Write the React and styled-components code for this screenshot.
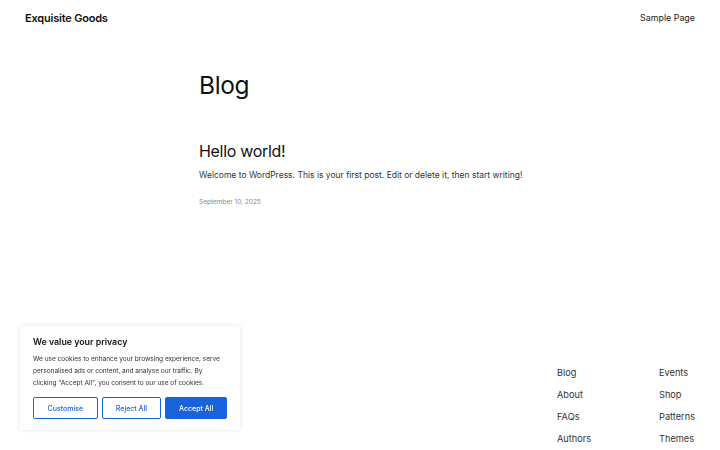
import styled, { createGlobalStyle } from "styled-components";

const Global = createGlobalStyle`
  html, body { margin: 0; padding: 0; background: #fff; }
  body {
    font-family: Inter, "Noto Sans", "Liberation Sans", sans-serif;
    color: #111;
    -webkit-font-smoothing: antialiased;
  }
`;

const Page = styled.div`
  width: 720px;
  height: 450px;
  display: flex;
  flex-direction: column;
  overflow: hidden;
`;

const Header = styled.header`
  display: flex;
  justify-content: space-between;
  align-items: center;
  height: 35px;
  padding: 0 25px;
`;

const SiteTitle = styled.div`
  font-size: 11px;
  font-weight: 600;
  letter-spacing: -0.2px;
`;

const NavLink = styled.a`
  font-size: 8.9px;
  color: #222;
  text-decoration: none;
`;

const Main = styled.main`
  width: 322px;
  margin: 0 auto;
  flex: 1;
`;

const PageTitle = styled.h1`
  margin: 34px 0 0;
  font-size: 24.5px;
  font-weight: 400;
  letter-spacing: -0.4px;
  line-height: 32px;
`;

const PostTitle = styled.h2`
  margin: 40px 0 0;
  font-size: 16px;
  font-weight: 400;
  letter-spacing: -0.3px;
  line-height: 20px;
`;

const Excerpt = styled.p`
  margin: 8px 0 0;
  font-size: 8.5px;
  line-height: 12px;
  color: #333;
  white-space: nowrap;
`;

const PostDate = styled.div`
  margin-top: 17px;
  font-size: 6.5px;
  color: #888;
`;

const Footer = styled.footer`
  display: grid;
  grid-template-columns: 102px auto;
  justify-content: end;
  padding: 0 25px 0 0;
`;

const FooterLink = styled.a`
  font-size: 9.2px;
  line-height: 22px;
  color: #333;
  text-decoration: none;
`;

const Banner = styled.div`
  position: fixed;
  left: 20px;
  bottom: 20px;
  width: 220px;
  box-sizing: border-box;
  padding: 10px 13px 11px;
  background: #fff;
  box-shadow: 0 0 4px rgba(0, 0, 0, 0.12);
  border-radius: 2px;
`;

const BannerTitle = styled.div`
  font-size: 8.8px;
  font-weight: 600;
  line-height: 12px;
  margin-bottom: 5px;
`;

const BannerText = styled.p`
  margin: 0;
  font-size: 6.6px;
  line-height: 12px;
  color: #333;
  letter-spacing: -0.05px;
`;

const Buttons = styled.div`
  display: flex;
  gap: 4px;
  margin-top: 8px;
`;

const Button = styled.button`
  flex: ${(p) => p.$flex};
  height: 22px;
  box-sizing: border-box;
  border: 1.5px solid #1863dc;
  border-radius: 2px;
  background: ${(p) => (p.$primary ? "#1863dc" : "#fff")};
  color: ${(p) => (p.$primary ? "#fff" : "#1863dc")};
  font-family: inherit;
  font-size: 7px;
  font-weight: 500;
  padding: 0;
`;

const links = ["Blog", "Events", "About", "Shop", "FAQs", "Patterns", "Authors", "Themes"];

export default function App() {
  return (
    <Page>
      <Global />
      <Header>
        <SiteTitle>Exquisite Goods</SiteTitle>
        <NavLink href="#">Sample Page</NavLink>
      </Header>
      <Main>
        <PageTitle>Blog</PageTitle>
        <PostTitle>Hello world!</PostTitle>
        <Excerpt>
          Welcome to WordPress. This is your first post. Edit or delete it, then start writing!
        </Excerpt>
        <PostDate>September 10, 2025</PostDate>
      </Main>
      <Footer>
        {links.map((l) => (
          <FooterLink key={l} href="#">
            {l}
          </FooterLink>
        ))}
      </Footer>
      <Banner>
        <BannerTitle>We value your privacy</BannerTitle>
        <BannerText>
          We use cookies to enhance your browsing experience, serve personalised ads or content,
          and analyse our traffic. By clicking "Accept All", you consent to our use of cookies.
        </BannerText>
        <Buttons>
          <Button $flex="64">Customise</Button>
          <Button $flex="59">Reject All</Button>
          <Button $flex="61" $primary>
            Accept All
          </Button>
        </Buttons>
      </Banner>
    </Page>
  );
}
